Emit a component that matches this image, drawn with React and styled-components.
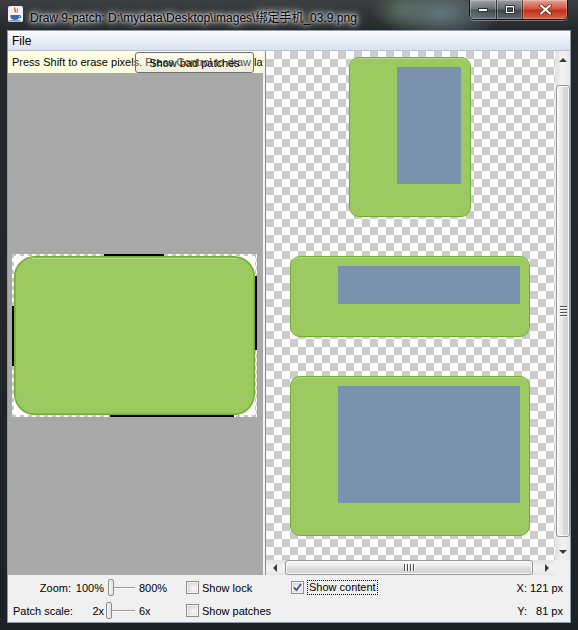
import React from "react";
import styled, { createGlobalStyle } from "styled-components";

const UI = '"Liberation Sans", "Noto Sans CJK SC", Arial, sans-serif';

const Global = createGlobalStyle`
  html, body { margin: 0; padding: 0; background: #1b1f23; }
  body { font-family: ${UI}; overflow: hidden; }
  * { box-sizing: border-box; }
`;

const Window = styled.div`
  width: 578px;
  height: 630px;
  display: flex;
  flex-direction: column;
  background:
    radial-gradient(ellipse 60px 30px at 440px 14px, rgba(140, 175, 180, 0.55), transparent),
    radial-gradient(ellipse 30px 20px at 400px 10px, rgba(120, 160, 120, 0.35), transparent),
    linear-gradient(180deg, #3c3f42 0px, #26292c 30px, #1d2227 100%);
`;

const TitleBar = styled.div`
  height: 31px;
  display: flex;
  align-items: flex-start;
  padding-left: 8px;
`;

const AppIcon = styled.svg`
  margin-top: 6px;
  width: 15px;
  height: 16px;
  flex: none;
`;

const Title = styled.div`
  margin-top: 8px;
  margin-left: 7px;
  font-size: 12px;
  color: #000;
  white-space: nowrap;
  text-shadow: 0 0 6px rgba(255, 255, 255, 0.95), 0 0 10px rgba(255, 255, 255, 0.8), 0 0 3px #fff;
`;

const Captions = styled.div`
  margin-left: auto;
  margin-right: 10px;
  display: flex;
  height: 20px;
  border: 1px solid rgba(0, 0, 0, 0.7);
  border-top: none;
  border-radius: 0 0 5px 5px;
  overflow: hidden;
  box-shadow: 0 1px 0 rgba(255, 255, 255, 0.35);
`;

const CapBtn = styled.div`
  width: ${(p) => p.$w}px;
  height: 100%;
  display: flex;
  align-items: center;
  justify-content: center;
  border-left: ${(p) => (p.$first ? "none" : "1px solid rgba(0,0,0,0.55)")};
  box-shadow: inset 0 0 0 1px rgba(255, 255, 255, 0.25);
  background: ${(p) =>
    p.$close
      ? "linear-gradient(180deg, #e6a496 0%, #d4553d 45%, #c0301a 55%, #d56a45 100%)"
      : "linear-gradient(180deg, rgba(230,235,240,0.55) 0%, rgba(170,180,190,0.4) 45%, rgba(80,90,100,0.45) 55%, rgba(140,160,170,0.5) 100%)"};
`;

const Body = styled.div`
  flex: 1;
  display: flex;
  padding: 0 8px 8px;
`;

const Inner = styled.div`
  flex: 1;
  display: flex;
  flex-direction: column;
  background: #f0f0f0;
  box-shadow: 0 0 0 1px #8d9aa6;
`;

const MenuBar = styled.div`
  height: 20px;
  display: flex;
  align-items: center;
  padding-left: 4px;
  font-size: 12px;
  color: #000;
  background: linear-gradient(180deg, #fbfcfe 0%, #e9edf6 50%, #dce2ef 100%);
  border-bottom: 1px solid #b9c0cb;
`;

const Main = styled.div`
  height: 524px;
  display: flex;
`;

const LeftPane = styled.div`
  width: 255px;
  display: flex;
  flex-direction: column;
  background: #a9a9a9;
`;

const HintBar = styled.div`
  position: relative;
  height: 22px;
  display: flex;
  align-items: center;
  padding-left: 4px;
  background: #ffffe1;
  font-size: 11px;
  color: #000;
  white-space: nowrap;
  overflow: hidden;
`;

const OverlayButton = styled.div`
  position: absolute;
  left: 127px;
  top: 1px;
  width: 119px;
  height: 21px;
  border: 1px solid #707070;
  border-radius: 3px;
  background: linear-gradient(180deg, rgba(242,242,242,0.35) 0%, rgba(235,235,235,0.3) 50%, rgba(221,221,221,0.35) 51%, rgba(207,207,207,0.35) 100%);
  display: flex;
  align-items: center;
  justify-content: center;
  font-size: 11px;
  color: #000;
`;

const Canvas = styled.div`
  flex: 1;
  padding: 181px 0 0 4px;
`;

const Divider = styled.div`
  width: 3px;
  background: #f4f4f4;
  border-right: 1px solid #8a8a8a;
`;

const RightPane = styled.div`
  flex: 1;
  display: grid;
  grid-template-columns: 1fr 15px;
  grid-template-rows: 1fr 15px;
`;

const Checker = styled.div`
  background: repeating-conic-gradient(#cccccc 0% 25%, #ffffff 0% 50%) 0 0 / 16px 16px;
  display: flex;
  flex-direction: column;
  align-items: center;
  padding: 6px 1px 0 0;
  gap: 39px;
  overflow: hidden;
`;

const Preview = styled.div`
  width: ${(p) => p.$w}px;
  height: ${(p) => p.$h}px;
  flex: none;
  display: flex;
  padding: 9px 9px 32px 47px;
  border: 1px solid #74ad36;
  border-radius: 10px;
  background: #9dca60;
  box-shadow: inset 0 1px 0 #b5d98a;
`;

const ContentArea = styled.div`
  flex: 1;
  background: #7b91ad;
`;

const VScroll = styled.div`
  display: flex;
  flex-direction: column;
  background: linear-gradient(90deg, #e3e3e3, #f1f1f1 40%, #f1f1f1 60%, #e6e6e6);
  border-left: 1px solid #e8e8e8;
`;

const HScroll = styled.div`
  display: flex;
  background: linear-gradient(180deg, #e3e3e3, #f1f1f1 40%, #f1f1f1 60%, #e6e6e6);
`;

const Corner = styled.div`
  background: #f0f0f0;
`;

const ArrowBtn = styled.div`
  flex: none;
  width: ${(p) => (p.$horizontal ? "17px" : "100%")};
  height: ${(p) => (p.$horizontal ? "100%" : "17px")};
  display: flex;
  align-items: center;
  justify-content: center;
`;

const Spacer = styled.div`
  flex: ${(p) => (p.$grow ? 1 : "none")};
  width: ${(p) => (p.$horizontal ? `${p.$size || 0}px` : "auto")};
  height: ${(p) => (p.$horizontal ? "auto" : `${p.$size || 0}px`)};
`;

const Thumb = styled.div`
  flex: none;
  ${(p) =>
    p.$horizontal
      ? `width:${p.$size}px; height:100%; background: linear-gradient(180deg,#f5f5f5 0%,#e9e9e9 45%,#d9d9d9 55%,#d2d2d2 100%);`
      : `height:${p.$size}px; width:100%; background: linear-gradient(90deg,#f5f5f5 0%,#e9e9e9 45%,#d9d9d9 55%,#d2d2d2 100%);`}
  border: 1px solid #979797;
  border-radius: 3px;
  box-shadow: inset 0 0 0 1px rgba(255, 255, 255, 0.8);
  display: flex;
  align-items: center;
  justify-content: center;
`;

const Grip = styled.div`
  display: flex;
  flex-direction: ${(p) => (p.$horizontal ? "row" : "column")};
  gap: 1px;
`;

const GripLine = styled.div`
  ${(p) => (p.$horizontal ? "width:1px;height:7px;" : "width:7px;height:1px;")}
  background: #505050;
  box-shadow: ${(p) => (p.$horizontal ? "1px 0 0 #fff" : "0 1px 0 #fff")};
  margin: ${(p) => (p.$horizontal ? "0 1px 0 0" : "0 0 1px 0")};
`;

const Controls = styled.div`
  height: 47px;
  display: grid;
  grid-template-columns: 58px 33px 32px 50px 105px 1fr auto;
  grid-template-rows: 23px 23px;
  align-items: center;
  padding: 1px 7px 0 5px;
  font-size: 11px;
  color: #000;
`;

const Label = styled.div`
  text-align: ${(p) => p.$align || "left"};
  padding-left: ${(p) => p.$pl || 0}px;
  white-space: nowrap;
  font-family: ${UI};
`;

const SliderBox = styled.div`
  height: 100%;
  display: flex;
  align-items: center;
  padding-left: ${(p) => p.$pos}px;
  padding-right: 1px;
`;

const SliderThumb = styled.div`
  width: 6px;
  height: 17px;
  flex: none;
  border: 1px solid #8c8c8c;
  border-radius: 2px;
  background: linear-gradient(90deg, #f7f7f7, #e0e0e0);
`;

const SliderTrack = styled.div`
  flex: 1;
  height: 1px;
  background: #9c9c9c;
  box-shadow: 0 1px 0 #ffffff;
`;

const CheckRow = styled.div`
  display: flex;
  align-items: center;
  gap: 3px;
  white-space: nowrap;
`;

const Box = styled.div`
  width: 13px;
  height: 13px;
  flex: none;
  border: 1px solid #8e8f8f;
  background: #f4f4f4;
  box-shadow: inset 0 0 0 1px #f4f4f4, inset 1px 1px 3px 2px #d8d8d8;
  display: flex;
  align-items: center;
  justify-content: center;
`;

const FocusText = styled.span`
  border: 1px dotted #000;
  padding: 0 1px;
  line-height: 13px;
`;

const Coord = styled.div`
  display: flex;
  justify-content: flex-end;
  gap: 2px;
  white-space: nowrap;
`;

const CoordValue = styled.span`
  min-width: 34px;
  text-align: right;
`;

function Arrow({ dir }) {
  const pts = {
    up: "0,5 4,1 8,5",
    down: "0,1 4,5 8,1",
    left: "5,0 1,4 5,8",
    right: "1,0 5,4 1,8",
  }[dir];
  const horiz = dir === "left" || dir === "right";
  return (
    <svg width={horiz ? 6 : 8} height={horiz ? 8 : 6} viewBox={horiz ? "0 0 6 8" : "0 0 8 6"}>
      <polygon points={pts} fill="#3a3a3a" />
    </svg>
  );
}

function GripMarks({ horizontal }) {
  return (
    <Grip $horizontal={horizontal}>
      {[0, 1, 2, 3].map((i) => (
        <GripLine key={i} $horizontal={horizontal} />
      ))}
    </Grip>
  );
}

function CheckBox({ checked }) {
  return (
    <Box>
      {checked && (
        <svg width="9" height="9" viewBox="0 0 9 9">
          <path d="M1 4.5 L3.5 7.2 L8 1" stroke="#3d4f8c" strokeWidth="1.8" fill="none" />
        </svg>
      )}
    </Box>
  );
}

function NinePatch() {
  return (
    <svg width="245" height="163" viewBox="0 0 245 163">
      <defs>
        <pattern id="dash" width="8" height="8" patternUnits="userSpaceOnUse">
          <rect width="8" height="8" fill="#ffffff" />
          <rect width="4" height="4" fill="#c6c6c6" />
          <rect x="4" y="4" width="4" height="4" fill="#c6c6c6" />
        </pattern>
      </defs>
      <rect x="0" y="0" width="245" height="163" fill="url(#dash)" />
      <rect x="2" y="2" width="241" height="159" fill="#ffffff" />
      <rect x="92" y="0" width="60" height="2" fill="#000" />
      <rect x="243" y="22" width="2" height="74" fill="#000" />
      <rect x="98" y="161" width="124" height="2" fill="#000" />
      <rect x="0" y="52" width="2" height="60" fill="#000" />
      <rect x="2.8" y="2.8" width="239.4" height="157.4" rx="20" fill="#9dca60" stroke="#74ad35" strokeWidth="1.6" />
      <path d="M20 4.5 H225" stroke="#bcdc92" strokeWidth="1.2" />
    </svg>
  );
}

function JavaIcon() {
  return (
    <AppIcon viewBox="0 0 15 16">
      <rect x="0" y="0" width="15" height="16" rx="2" fill="#f3f3f3" />
      <path d="M7 1.5 C5 3.5 9 4.5 7 6.5" stroke="#e0601c" strokeWidth="1.4" fill="none" />
      <path d="M9.5 2.5 C8.2 4 10.5 4.8 9 6.5" stroke="#e0601c" strokeWidth="1.1" fill="none" />
      <path d="M2.5 9 H11 V11 C11 13 9.5 14 7 14 C4.5 14 2.5 13 2.5 11 Z" fill="#3b6aa8" />
      <path d="M11 9.6 C13.5 9.6 13.5 12 11 12" stroke="#3b6aa8" strokeWidth="1.1" fill="none" />
      <rect x="1.5" y="14.4" width="11" height="1" fill="#3b6aa8" />
    </AppIcon>
  );
}

export default function App() {
  return (
    <>
      <Global />
      <Window>
        <TitleBar>
          <JavaIcon />
          <Title>Draw 9-patch: D:\mydata\Desktop\images\绑定手机_03.9.png</Title>
          <Captions>
            <CapBtn $w={26} $first>
              <svg width="10" height="4" viewBox="0 0 10 4">
                <rect x="0.5" y="0.5" width="9" height="3" fill="#fff" stroke="#333" strokeWidth="1" />
              </svg>
            </CapBtn>
            <CapBtn $w={26}>
              <svg width="10" height="9" viewBox="0 0 10 9">
                <rect x="0.5" y="0.5" width="9" height="8" fill="none" stroke="#333" />
                <rect x="1.5" y="1.5" width="7" height="6" fill="none" stroke="#fff" />
                <rect x="2.5" y="3.5" width="5" height="3" fill="none" stroke="#333" />
              </svg>
            </CapBtn>
            <CapBtn $w={45} $close>
              <svg width="13" height="11" viewBox="0 0 13 11">
                <path d="M2 1.5 L11 9.5 M11 1.5 L2 9.5" stroke="#5a1a10" strokeWidth="3.6" strokeLinecap="round" />
                <path d="M2 1.5 L11 9.5 M11 1.5 L2 9.5" stroke="#ffffff" strokeWidth="2.2" strokeLinecap="round" />
              </svg>
            </CapBtn>
          </Captions>
        </TitleBar>
        <Body>
          <Inner>
            <MenuBar>File</MenuBar>
            <Main>
              <LeftPane>
                <HintBar>
                  Press Shift to erase pixels. Press Control to draw layout bounds
                  <OverlayButton>Show bad patches</OverlayButton>
                </HintBar>
                <Canvas>
                  <NinePatch />
                </Canvas>
              </LeftPane>
              <Divider />
              <RightPane>
                <Checker>
                  <Preview $w={122} $h={160}>
                    <ContentArea />
                  </Preview>
                  <Preview $w={240} $h={81}>
                    <ContentArea />
                  </Preview>
                  <Preview $w={240} $h={160}>
                    <ContentArea />
                  </Preview>
                </Checker>
                <VScroll>
                  <ArrowBtn><Arrow dir="up" /></ArrowBtn>
                  <Spacer $size={17} />
                  <Thumb $size={452}><GripMarks /></Thumb>
                  <Spacer $grow />
                  <ArrowBtn><Arrow dir="down" /></ArrowBtn>
                </VScroll>
                <HScroll>
                  <ArrowBtn $horizontal><Arrow dir="left" /></ArrowBtn>
                  <Spacer $horizontal $size={2} />
                  <Thumb $horizontal $size={248}><GripMarks horizontal /></Thumb>
                  <Spacer $horizontal $grow />
                  <ArrowBtn $horizontal><Arrow dir="right" /></ArrowBtn>
                </HScroll>
                <Corner />
              </RightPane>
            </Main>
            <Controls>
              <Label $align="right">Zoom:</Label>
              <Label $align="right">100%</Label>
              <SliderBox $pos={4}><SliderThumb /><SliderTrack /></SliderBox>
              <Label $pl={3}>800%</Label>
              <CheckRow><CheckBox /><span>Show lock</span></CheckRow>
              <CheckRow><CheckBox checked /><FocusText>Show content</FocusText></CheckRow>
              <Coord><span>X:</span><CoordValue>121 px</CoordValue></Coord>

              <Label>Patch scale:</Label>
              <Label $align="right">2x</Label>
              <SliderBox $pos={2}><SliderThumb /><SliderTrack /></SliderBox>
              <Label $pl={3}>6x</Label>
              <CheckRow><CheckBox /><span>Show patches</span></CheckRow>
              <div />
              <Coord><span>Y:</span><CoordValue>81 px</CoordValue></Coord>
            </Controls>
          </Inner>
        </Body>
      </Window>
    </>
  );
}
